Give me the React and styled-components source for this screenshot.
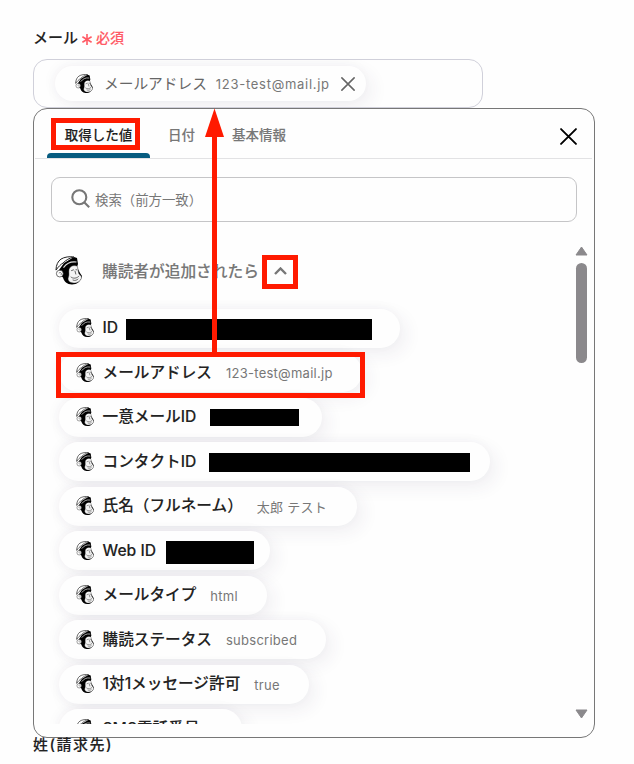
import React, { useState } from 'react';
import styled, { createGlobalStyle } from 'styled-components';

const GlobalStyle = createGlobalStyle`
  * {
    box-sizing: border-box;
  }
  body {
    margin: 0;
    background: #fefefe;
    font-family: 'Inter', 'Noto Sans CJK JP', sans-serif;
    color: #222;
  }
`

const Page = styled.div`
  position: relative;
  width: 634px;
  height: 764px;
  padding: 26px 0 0 33px;
  overflow: hidden;
`
const FieldLabel = styled.div`
  display: flex;
  align-items: center;
  height: 23px;
  font-size: 15px;
  font-weight: 500;
  line-height: 23px;
  -webkit-text-stroke: 0.1px currentColor;
  white-space: nowrap;
`
const Required = styled.span`
  display: flex;
  align-items: center;
  gap: 4px;
  margin-left: 4px;
  font-size: 14px;
  color: #ff5a65;

  svg {
    margin-top: 4px;
  }
`
const Input = styled.div`
  display: flex;
  align-items: center;
  width: 450px;
  height: 49px;
  margin-top: 10px;
  padding-left: 21px;
  border: 1px solid #d0d0da;
  border-radius: 14px;
  overflow: hidden;
`
const Chip = styled.div`
  display: flex;
  align-items: center;
  flex-shrink: 0;
  width: ${(p) => p.$width}px;
  height: ${(p) => p.$height || 39}px;
  padding-left: ${(p) => p.$pad || 17}px;
  border-radius: 20px;
  background: #fefefe;
  box-shadow: 6px 6px 18px rgba(60, 40, 80, 0.07), -3px -2px 12px rgba(60, 40, 80, 0.035);
  white-space: nowrap;
`
const ChipName = styled.span`
  margin-left: 9px;
  font-size: 15.65px;
  font-weight: 500;
  line-height: 24px;
  -webkit-text-stroke: 0.1px currentColor;
  color: #222;
`
const SelectedName = styled(ChipName)`
  margin-left: 11px;
  font-size: 14.7px;
  font-weight: 400;
  -webkit-text-stroke: 0;
  color: #666;
`
const ChipValue = styled.span`
  margin-left: 14px;
  padding-top: 1px;
  font-size: 13px;
  letter-spacing: 0.26px;
  color: #777;
`
const SelectedValue = styled(ChipValue)`
  margin-left: 9px;
  padding-top: 0;
  letter-spacing: 0.72px;
`
const Mask = styled.span`
  width: ${(p) => p.$width}px;
  height: ${(p) => p.$height}px;
  margin-left: ${(p) => p.$gap}px;
  margin-top: ${(p) => p.$top || 0}px;
  background: #000;
`
const IconButton = styled.button`
  display: flex;
  padding: 0;
  border: 0;
  background: none;
  cursor: pointer;
`
const ChipRemove = styled(IconButton)`
  margin-left: 11px;
`
const Panel = styled.div`
  width: 562px;
  height: 630px;
  border: 1px solid #777;
  border-radius: 14px;
  background: #fefefe;
  overflow: hidden;
`
const Tabs = styled.div`
  display: flex;
  height: 50px;
  margin: 0 2px 0 1px;
  padding: 0 15px 0 12px;
  border-bottom: 1px solid #e2e2e4;
`
const Tab = styled.button`
  display: flex;
  align-items: center;
  justify-content: center;
  width: ${(p) => p.$width}px;
  height: 49px;
  padding: 0;
  border: 0;
  background: none;
  font-family: inherit;
  font-size: 13.5px;
  font-weight: 500;
  -webkit-text-stroke: 0.1px currentColor;
  color: ${(p) => (p.$active ? '#222' : '#777')};
  white-space: nowrap;
  position: relative;

  &::after {
    content: '';
    position: absolute;
    inset: auto 0 0;
    height: 5px;
    border-radius: 4px 4px 0 0;
    background: ${(p) => (p.$active ? '#075c80' : 'none')};
  }
`
const TabsClose = styled(IconButton)`
  margin: 19px 0 0 auto;
  align-self: flex-start;
`
const Search = styled.div`
  display: flex;
  align-items: center;
  gap: 5px;
  width: 526px;
  height: 45px;
  margin: 18px 0 0 17px;
  padding: 0 0 2px 19px;
  border: 1px solid #c5c5c7;
  border-radius: 9px;
  font-size: 13.4px;
  color: #777;
`
const Body = styled.div`
  display: flex;
  height: 502px;
`
const List = styled.div`
  flex: 1;
  overflow: hidden;
`
const Group = styled.div`
  display: flex;
  align-items: center;
  height: 40px;
  margin-top: 29px;
  padding-left: 21px;
`
const GroupName = styled.span`
  width: 172px;
  margin: -2px 0 0 20px;
  font-size: 15.7px;
  font-weight: 500;
  -webkit-text-stroke: 0.1px currentColor;
  color: #777;
  white-space: nowrap;
`
const Rows = styled.div`
  display: flex;
  flex-direction: column;
  gap: 5.5px;
  margin-top: 17.5px;
  padding-left: 24.5px;
`
const Scrollbar = styled.div`
  display: flex;
  flex-direction: column;
  align-items: center;
  width: 16px;
  margin: 24px 5px 0 0;
  height: 473px;
`
const Thumb = styled.div`
  width: 11px;
  height: 100px;
  margin: 7px 0 auto;
  border-radius: 6px;
  background: #8b898c;
`
const NextLabel = styled(FieldLabel)`
  margin-top: -5px;
  font-size: 15px;
  letter-spacing: 1.5px;
`
const Annotations = styled.svg`
  position: absolute;
  inset: 0;
  pointer-events: none;
`

const Monkey = ({ size }) => (
  <svg width={size} height={size * 1.08} viewBox="0 0 27 29" fill="none">
    {/* head and hair */}
    <path d="M4 14L9 7l10-6 3 1 1 6-1 3 3 6 2 3c-1 5-5 8.500-10 8.500-5 0-8-3-9-7l-4-3z" fill="#000" />
    {/* cap */}
    <path d="M1 14C1 9 3 5 6 3c3-2 9-3 13-2-5 1-8 3-11 6-2 1-5 4-7 7z" fill="#fff" stroke="#222" strokeWidth="1" strokeLinejoin="round" />
    <path d="M8.500 11.500c3-4 7-6.500 13-5.500" stroke="#ddd" strokeWidth="1.100" />
    {/* face */}
    <path d="M14 13.500c1-4 6-5 8.500-3l1 6c0 2 3.500 3 3 5.500-1 3-4 5-7.500 5-4.500 0-7-3-5.500-6 1-2 0-5 .5-7.500z" fill="#f4f4f4" stroke="#222" strokeWidth=".4" />
    <path d="M16.500 14.500l2-.7m2.500-.2l1 .2M20 15l.8 3M16 21c2 1.800 6 1.500 8-1m-6 4c2 1 4 0 5-1" stroke="#444" strokeWidth=".8" strokeLinecap="round" />
    {/* ear */}
    <circle cx="4.800" cy="17.500" r="3.400" fill="#fff" stroke="#333" strokeWidth=".7" />
    <path d="M3.800 17c2-1.500 3.500.5 2 2" stroke="#555" strokeWidth=".8" />
  </svg>
)

const Cross = ({ size, color, stroke }) => (
  <svg width={size} height={size} viewBox="0 0 16 16" stroke={color} strokeWidth={stroke} strokeLinecap="round">
    <path d="M1 1l14 14M15 1L1 15" />
  </svg>
)

const tabs = [
  { name: '取得した値', width: 103 },
  { name: '日付', width: 63 },
  { name: '基本情報', width: 92 },
]

const items = [
  { name: 'ID', width: 341.5, mask: { $width: 246, $height: 21, $gap: 8, $top: 2 } },
  { name: 'メールアドレス', value: '123-test@mail.jp', width: 303.5 },
  { name: '一意メールID', width: 263.5, mask: { $width: 89, $height: 17, $gap: 13.5, $top: 1 } },
  { name: 'コンタクトID', width: 431.5, mask: { $width: 261, $height: 19, $gap: 12.5, $top: 1 } },
  { name: '氏名（フルネーム）', value: '太郎 テスト', width: 298.5 },
  { name: 'Web ID', width: 211.5, mask: { $width: 88, $height: 23, $gap: 10.5, $top: 3 } },
  { name: 'メールタイプ', value: 'html', width: 208.5 },
  { name: '購読ステータス', value: 'subscribed', width: 267.5 },
  { name: '1対1メッセージ許可', value: 'true', width: 250.5 },
  { name: 'SMS電話番号', width: 183.5 },
]

const App = () => {
  const [active, setActive] = useState(0);

  return (
    <Page>
      <GlobalStyle />
      <FieldLabel>
        メール
        <Required>
          <svg width="10" height="11" viewBox="0 0 10 11" stroke="#ff5a65" strokeWidth="1.6">
            <path d="M5 0v11M.4 2.8l9.2 5.4M9.6 2.8L.4 8.2" />
          </svg>
          必須
        </Required>
      </FieldLabel>
      <Input>
        <Chip $width={311} $height={35} $pad={20}>
          <Monkey size={18} />
          <SelectedName>メールアドレス</SelectedName>
          <SelectedValue>123-test@mail.jp</SelectedValue>
          <ChipRemove><Cross size={14} color="#666" stroke={1.8} /></ChipRemove>
        </Chip>
      </Input>
      <Panel>
        <Tabs>
          {tabs.map((tab, i) => (
            <Tab key={tab.name} $width={tab.width} $active={i === active} onClick={() => setActive(i)}>{tab.name}</Tab>
          ))}
          <TabsClose><Cross size={17} color="#000" stroke={1.8} /></TabsClose>
        </Tabs>
        <Search>
          <svg width="19" height="19" viewBox="0 0 19 19" fill="none" stroke="#777" strokeWidth="2.1">
            <circle cx="8.3" cy="8.3" r="7" />
            <path d="M13.2 13.2l5 5" />
          </svg>
          検索（前方一致）
        </Search>
        <Body>
          <List>
            <Group>
              <Monkey size={27} />
              <GroupName>購読者が追加されたら</GroupName>
              <svg width="13" height="8" viewBox="0 0 13 8" fill="none" stroke="#777" strokeWidth="2.4">
                <path d="M1 7l5.5-5.5L12 7" />
              </svg>
            </Group>
            <Rows>
              {items.map((item) => (
                <Chip key={item.name} $width={item.width}>
                  <Monkey size={18} />
                  <ChipName>{item.name}</ChipName>
                  {item.value && <ChipValue>{item.value}</ChipValue>}
                  {item.mask && <Mask {...item.mask} />}
                </Chip>
              ))}
            </Rows>
          </List>
          <Scrollbar>
            <svg width="13" height="10" viewBox="0 0 13 10" fill="#8b898c" stroke="#8b898c" strokeLinejoin="round">
              <path d="M6.5 1L12 9H1z" />
            </svg>
            <Thumb />
            <svg width="13" height="10" viewBox="0 0 13 10" fill="#8b898c" stroke="#8b898c" strokeLinejoin="round">
              <path d="M6.5 9L12 1H1z" />
            </svg>
          </Scrollbar>
        </Body>
      </Panel>
      <NextLabel>姓(請求先)</NextLabel>
      <Annotations width="634" height="764" fill="none" stroke="#ff1a00" strokeWidth="5">
        <rect x="53.5" y="120.5" width="84" height="27" />
        <rect x="264.5" y="257.5" width="31" height="29" />
        <rect x="58.5" y="354.5" width="304" height="41" />
        <path d="M214.5 353V135" />
        <path d="M214.5 108.5l9.5 28.5h-19z" fill="#ff1a00" stroke="none" />
      </Annotations>
    </Page>
  );
}
export default App;
